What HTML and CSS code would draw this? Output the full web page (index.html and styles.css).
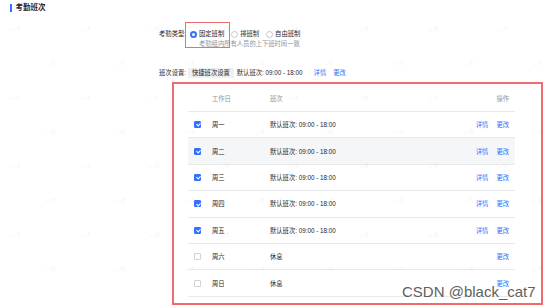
FILE: index.html
```html
<!DOCTYPE html>
<html lang="zh-CN">
<head>
  <meta charset="UTF-8" />
  <title>考勤班次</title>
  <link rel="stylesheet" href="styles.css">
</head>
<body>
  <div class="page">
    <h2 class="section-title">考勤班次</h2>

    <div class="form">
      <div class="form-row">
        <span class="label">考勤类型:</span>
        <div class="field">
          <div class="radio-group">
            <label class="radio checked"><i></i>固定班制</label>
            <label class="radio"><i></i>排班制</label>
            <label class="radio"><i></i>自由班制</label>
            <span class="mark-box small"></span>
          </div>
          <div class="hint">考勤组内所有人员的上下班时间一致</div>
        </div>
      </div>

      <div class="form-row shift-row">
        <span class="label">班次设置:</span>
        <div class="field inline">
          <button class="quick-btn">快捷班次设置</button>
          <span class="shift-text">默认班次: 09:00 - 18:00</span>
          <a class="link first">详情</a>
          <a class="link">更改</a>
        </div>
      </div>
    </div>

    <div class="table-box">
      <table class="day-table">
        <thead>
          <tr>
            <th class="col-check"></th>
            <th class="col-day">工作日</th>
            <th>班次</th>
            <th class="col-op">操作</th>
          </tr>
        </thead>
        <tbody>
          <tr>
            <td class="col-check"><span class="checkbox on"></span></td>
            <td>周一</td><td>默认班次: 09:00 - 18:00</td>
            <td class="col-op"><a class="link">详情</a><a class="link">更改</a></td>
          </tr>
          <tr class="hover">
            <td class="col-check"><span class="checkbox on"></span></td>
            <td>周二</td><td>默认班次: 09:00 - 18:00</td>
            <td class="col-op"><a class="link">详情</a><a class="link">更改</a></td>
          </tr>
          <tr>
            <td class="col-check"><span class="checkbox on"></span></td>
            <td>周三</td><td>默认班次: 09:00 - 18:00</td>
            <td class="col-op"><a class="link">详情</a><a class="link">更改</a></td>
          </tr>
          <tr>
            <td class="col-check"><span class="checkbox on"></span></td>
            <td>周四</td><td>默认班次: 09:00 - 18:00</td>
            <td class="col-op"><a class="link">详情</a><a class="link">更改</a></td>
          </tr>
          <tr>
            <td class="col-check"><span class="checkbox on"></span></td>
            <td>周五</td><td>默认班次: 09:00 - 18:00</td>
            <td class="col-op"><a class="link">详情</a><a class="link">更改</a></td>
          </tr>
          <tr>
            <td class="col-check"><span class="checkbox"></span></td>
            <td>周六</td><td>休息</td>
            <td class="col-op"><a class="link">更改</a></td>
          </tr>
          <tr>
            <td class="col-check"><span class="checkbox"></span></td>
            <td>周日</td><td>休息</td>
            <td class="col-op"><a class="link">更改</a></td>
          </tr>
        </tbody>
      </table>
    </div>
  </div>

  <div class="watermark" id="watermark"></div>
  <div class="csdn-mark">CSDN @black_cat7</div>

  <script>
    // tile the faint name watermark over the page
    const wm = document.getElementById("watermark");
    for (let k = 0; k <= 7; k++) {
      const y = 30 + 34.3 * k;
      const x0 = (k % 2 === 0) ? 15 : 50;
      for (let j = 0; j <= 7; j++) {
        const x = x0 + 69.6 * j;
        if (x > 540) continue;
        const s = document.createElement("span");
        s.textContent = "陈健";
        s.style.left = (x - 6) + "px";
        s.style.top = (y - 4) + "px";
        wm.appendChild(s);
      }
    }
  </script>
</body>
</html>
```

FILE: styles.css
```css
:root {
  --blue: #3370ff;
  --text: #1f2329;
  --grey: #8f959e;
  --line: #e8e9eb;
  --mark: #ef6b6e;
  --font: "Liberation Sans", "Noto Sans CJK SC", sans-serif;
}

body {
  margin: 0;
  background: #fff;
  font-family: var(--font);
  font-size: 6.3px;
  color: var(--text);
  width: 554px;
  height: 308px;
  overflow: hidden;
  position: relative;
}

.page {
  padding-top: 3px;
}

.section-title {
  margin: 0 0 0 10px;
  font-size: 7.5px;
  line-height: 10px;
  font-weight: bold;
  color: #1f2329;
  display: flex;
  align-items: center;
  gap: 4px;
}

.section-title::before {
  content: "";
  width: 1.5px;
  height: 8px;
  background: var(--blue);
}

.form {
  margin-top: 16px;
  display: flex;
  flex-direction: column;
  gap: 19px;
}

.form-row {
  display: flex;
  line-height: 10px;
}

.label {
  width: 36px;
  margin-left: 150px;
  text-align: right;
  color: #1f2329;
  white-space: nowrap;
}

.field {
  margin-left: 2px;
}

.field.inline {
  display: flex;
  align-items: center;
}

.radio-group {
  position: relative;
  display: flex;
  align-items: center;
  padding-left: 2px;
}

.radio {
  display: flex;
  align-items: center;
  gap: 2px;
  margin-right: 7px;
}

.radio i {
  box-sizing: border-box;
  width: 7px;
  height: 7px;
  border-radius: 50%;
  border: 1px solid #c4c8ce;
  background: #fff;
}

.radio.checked i {
  border: 2px solid var(--blue);
}

.mark-box {
  position: absolute;
  left: -3px;
  top: -7px;
  width: 45px;
  height: 26px;
  border: 1.5px solid var(--mark);
  box-sizing: border-box;
}

.hint {
  padding-left: 11px;
  color: var(--grey);
}

.quick-btn {
  font: inherit;
  color: var(--text);
  background: #eff0f1;
  border: none;
  border-radius: 1px;
  height: 10px;
  line-height: 10px;
  padding: 0 4px;
  margin-right: 3px;
}

.link {
  color: var(--blue);
  cursor: pointer;
}

.shift-text {
  margin-right: 11px;
}

.field.inline .link.first {
  margin-right: 7px;
}

.table-box {
  margin: 4px 0 0 172px;
  width: 371px;
  height: 223px;
  box-sizing: border-box;
  border: 2px solid var(--mark);
  padding: 2px 26px 0 14px;
}

.day-table {
  width: 100%;
  border-collapse: collapse;
}

.day-table th,
.day-table td {
  padding: 0;
  text-align: left;
  font-weight: normal;
  border-bottom: 1px solid var(--line);
  white-space: nowrap;
}

.day-table th {
  height: 25px;
  color: var(--grey);
}

.day-table td {
  height: 25.4px;
}

.day-table tr.hover td {
  background: #f5f6f7;
}

.col-check {
  width: 24px;
}

.day-table .col-check {
  padding-left: 6px;
  box-sizing: border-box;
}

.col-day {
  width: 58px;
}

.day-table .col-op {
  text-align: right;
  padding-right: 6px;
}

.col-op .link + .link {
  margin-left: 8px;
}

.checkbox {
  display: block;
  box-sizing: border-box;
  width: 7px;
  height: 7px;
  border: 1px solid #d0d3d6;
  border-radius: 1px;
  background: #fff;
}

.checkbox.on {
  background: var(--blue);
  border-color: var(--blue);
  position: relative;
}

.checkbox.on::after {
  content: "";
  position: absolute;
  left: 1.5px;
  top: 0.3px;
  width: 1.8px;
  height: 3.2px;
  border: solid #fff;
  border-width: 0 1px 1px 0;
  transform: rotate(45deg);
}

.watermark {
  position: absolute;
  inset: 0;
  pointer-events: none;
  overflow: hidden;
}

.watermark span {
  position: absolute;
  font-size: 6px;
  line-height: 8px;
  color: rgba(0, 0, 0, 0.06);
  transform: rotate(-18deg);
  white-space: nowrap;
}

.csdn-mark {
  position: absolute;
  left: 402px;
  top: 282px;
  font-family: "Liberation Sans", sans-serif;
  font-size: 15px;
  line-height: 20px;
  color: #606060;
  text-shadow: 0 0 2px #fff, 0 0 2px #fff;
  white-space: nowrap;
}
```
